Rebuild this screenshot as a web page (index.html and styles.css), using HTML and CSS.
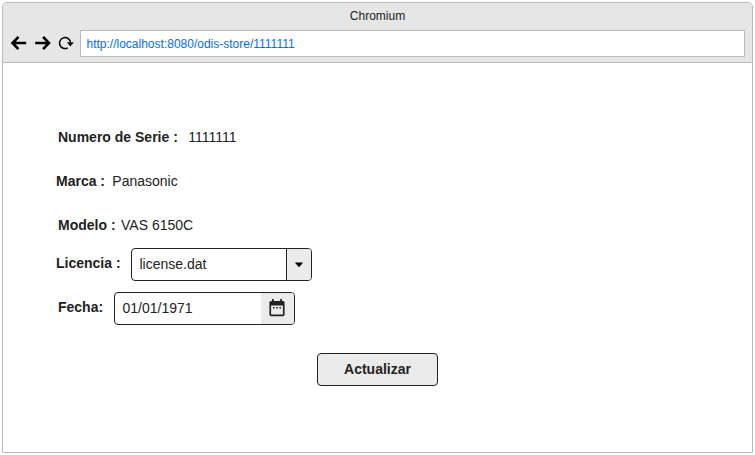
FILE: index.html
```html
<!DOCTYPE html>
<html lang="es">
<head>
<meta charset="utf-8">
<title>Chromium</title>
<link rel="stylesheet" href="styles.css">
</head>
<body>
<div class="window">
  <header class="chrome">
    <div class="title">Chromium</div>
    <div class="toolbar">
      <svg class="nav" width="68" height="18" viewBox="0 0 68 18" fill="none" stroke="#000">
        <path d="M9.4 1.8 L3.6 8 L9.4 14.2 M3.9 8 H17.2" stroke-width="2.7"/>
        <path d="M34.1 1.8 L39.9 8 L34.1 14.2 M39.6 8 H26.2" stroke-width="2.7"/>
        <path d="M58.8 12.8 A5.5 5.5 0 1 1 61.5 7.6" stroke-width="1.5"/>
        <path d="M58 7.2 L64.9 7.6 L61.2 11.6 Z" fill="#000" stroke="none"/>
      </svg>
      <div class="address">http://localhost:8080/odis-store/1111111</div>
    </div>
  </header>
  <main class="page">
    <div class="row indent"><b class="label">Numero de Serie :</b><span class="serial">1111111</span></div>
    <div class="row"><b class="label">Marca :</b><span class="brand">Panasonic</span></div>
    <div class="row indent"><b class="label">Modelo :</b><span class="model">VAS 6150C</span></div>
    <div class="row field-row">
      <b class="label license-label">Licencia :</b>
      <div class="field">
        <span class="value">license.dat</span>
        <span class="addon arrow"><svg width="10" height="6" viewBox="0 0 10 6"><path d="M.8 .5 H9.2 L5 5.3 Z"/></svg></span>
      </div>
    </div>
    <div class="row field-row">
      <b class="label date-label">Fecha:</b>
      <div class="field">
        <span class="value date">01/01/1971</span>
        <span class="addon calendar">
          <svg width="16" height="18" viewBox="0 0 16 18" fill="#222">
            <path fill-rule="evenodd" d="M2 2 H3 V0 H4.8 V2 H11.2 V0 H13 V2 H14 Q15.6 2 15.6 3.6 V15.6 Q15.6 17.2 14 17.2 H2 Q.4 17.2 .4 15.6 V3.6 Q.4 2 2 2 Z M2.1 6.4 V15.4 H13.9 V6.4 Z"/>
            <path d="M4 8 H5.6 V9.5 H4 Z M7.2 8 H8.8 V9.5 H7.2 Z M10.4 8 H12 V9.5 H10.4 Z"/>
          </svg>
        </span>
      </div>
    </div>
    <button class="submit" type="button">Actualizar</button>
  </main>
</div>
</body>
</html>
```
FILE: styles.css
```css
* {
  box-sizing: border-box;
}

body {
  margin: 0;
  padding: 2px;
  background: #fff;
  color: #222;
  font: 14px/16px "Liberation Sans", Arial, sans-serif;
}

.window {
  width: 751px;
  height: 451px;
  border: 1px solid #bababa;
  border-radius: 5px 5px 0 0;
  overflow: hidden;
}

.chrome {
  height: 60px;
  background: #e6e6e6;
  border-bottom: 1px solid #bababa;
}

.title {
  height: 27px;
  padding-top: 5px;
  text-align: center;
  font-size: 12px;
}

.toolbar {
  display: flex;
  align-items: center;
  padding: 0 7px 0 6px;
}

.nav {
  margin-right: 3px;
}

.address {
  flex: 1;
  height: 27px;
  padding-left: 5.5px;
  border: 1px solid #bababa;
  background: #fff;
  color: #0070ef;
  font-size: 12px;
  line-height: 26px;
}

.page {
  padding: 52px 0 0 53px;
}

.row {
  display: flex;
  align-items: center;
  height: 44px;
}

.indent {
  padding-left: 2px;
}

.serial {
  margin-left: 10.4px;
}

.brand {
  margin-left: 7.3px;
}

.model {
  margin-left: 5.5px;
}

.field-row {
  align-items: flex-start;
}

.field-row .label {
  padding-top: 8px;
}

.license-label {
  width: 75px;
}

.date-label {
  width: 58px;
  padding-left: 2px;
}

.field {
  display: flex;
  width: 181px;
  height: 33px;
  margin-top: 1px;
  border: 1px solid #222;
  border-radius: 4px;
  overflow: hidden;
}

.value {
  flex: 1;
  padding: 7px 0 0 7.5px;
}

.addon {
  display: flex;
  align-items: center;
  justify-content: center;
  background: #ebebeb;
}

.arrow {
  width: 25px;
  border-left: 1px solid #222;
}

.calendar {
  width: 33px;
  padding: 0 2px 1px 0;
}

.submit {
  display: block;
  width: 121px;
  height: 33px;
  margin: 18px 0 0 261px;
  padding: 0;
  border: 1px solid #222;
  border-radius: 4px;
  background: #ebebeb;
  color: #222;
  font: bold 14px/31px "Liberation Sans", Arial, sans-serif;
}
```
